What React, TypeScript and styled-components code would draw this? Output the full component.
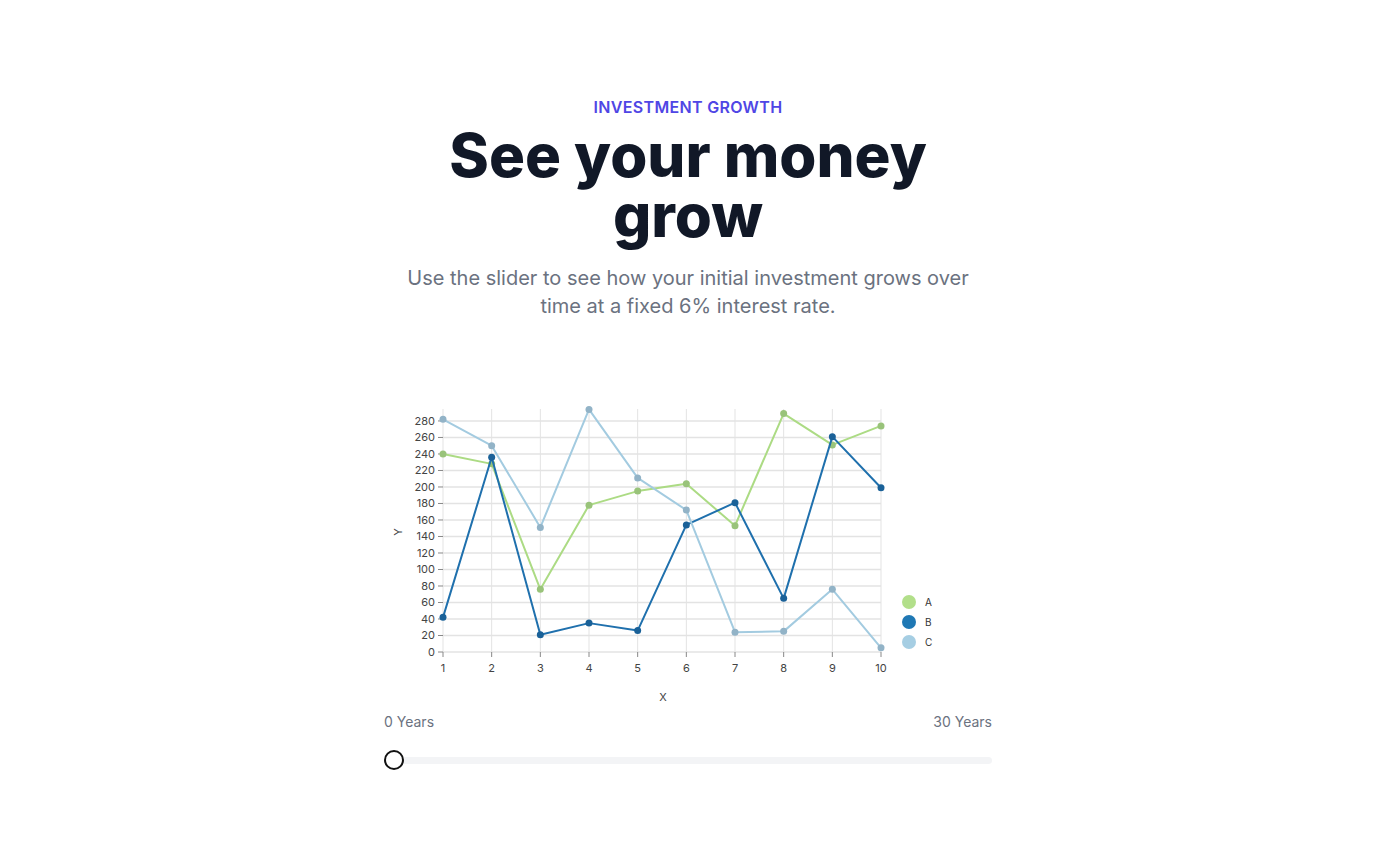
import React from "react";
import styled, { createGlobalStyle } from "styled-components";

const GlobalStyle = createGlobalStyle`
  html, body { margin: 0; padding: 0; background: #ffffff; }
  body { font-family: Inter, "Noto Sans", sans-serif; -webkit-font-smoothing: antialiased; }
  * { box-sizing: border-box; }
`;

const Page = styled.main`
  display: flex;
  flex-direction: column;
  align-items: center;
  padding-top: 93px;
  padding-bottom: 60px;
`;

const Hero = styled.header`
  display: flex;
  flex-direction: column;
  align-items: center;
  text-align: center;
  max-width: 672px;
`;

const Eyebrow = styled.p`
  margin: 0;
  font-size: 16px;
  line-height: 28px;
  font-weight: 600;
  color: #4f46e5;
  letter-spacing: 0.02em;
`;

const Title = styled.h1`
  margin: 4px 0 0;
  font-size: 60px;
  line-height: 60px;
  font-weight: 800;
  color: #111827;
  max-width: 520px;
`;

const Subtitle = styled.p`
  margin: 19px 0 0;
  max-width: 576px;
  font-size: 20px;
  line-height: 28px;
  color: #6b7280;
`;

const Panel = styled.section`
  width: 608px;
  margin-top: 80px;
  display: flex;
  flex-direction: column;
`;

const ChartSvg = styled.svg`
  display: block;
  width: 608px;
  height: 310px;
  font-family: Inter, "Noto Sans", sans-serif;
`;

const SliderLabels = styled.div`
  display: flex;
  justify-content: space-between;
  margin-top: 2px;
  font-size: 14px;
  line-height: 20px;
  color: #6b7280;
`;

const Range = styled.input`
  -webkit-appearance: none;
  appearance: none;
  width: 608px;
  height: 20px;
  margin: 18px 0 0;
  padding: 0;
  background: transparent;
  outline: none;

  &::-webkit-slider-runnable-track {
    height: 7px;
    background: #f3f4f6;
    border-radius: 4px;
  }
  &::-webkit-slider-thumb {
    -webkit-appearance: none;
    width: 20px;
    height: 20px;
    margin-top: -6.5px;
    border-radius: 50%;
    background: #ffffff;
    border: 2px solid #111111;
  }
`;

type Series = { name: string; line: string; point: string; legend: string; values: number[] };

const series: Series[] = [
  { name: "A", line: "#acdb84", point: "#99c37a", legend: "#b2df8a", values: [240, 228, 76, 178, 195, 204, 153, 289, 251, 274] },
  { name: "B", line: "#1f70ad", point: "#1a6198", legend: "#1f78b4", values: [42, 236, 21, 35, 26, 154, 181, 65, 261, 199] },
  { name: "C", line: "#a3cbe0", point: "#92b3c7", legend: "#a6cee3", values: [282, 250, 151, 294, 211, 172, 24, 25, 76, 5] },
];

const PL = 59;
const PR = 497;
const PT = 9;
const PB = 252;
const YMAX = 294.5;

const xPos = (i: number) => PL + ((PR - PL) / 9) * i;
const yPos = (v: number) => PB - (v / YMAX) * (PB - PT);

function Chart() {
  const yTicks = Array.from({ length: 15 }, (_, i) => i * 20);
  const xTicks = Array.from({ length: 10 }, (_, i) => i);
  return (
    <ChartSvg viewBox="0 0 608 310">
      {yTicks.map((t) => (
        <line key={"gy" + t} x1={PL} x2={PR} y1={yPos(t)} y2={yPos(t)} stroke="#e3e3e3" strokeWidth={1.5} />
      ))}
      {xTicks.map((i) => (
        <line key={"gx" + i} x1={xPos(i)} x2={xPos(i)} y1={PT} y2={PB} stroke="#e3e3e3" strokeWidth={1} />
      ))}
      {yTicks.map((t) => (
        <g key={"yt" + t}>
          <line x1={PL - 5} x2={PL} y1={yPos(t)} y2={yPos(t)} stroke="#888" strokeWidth={1} />
          <text x={PL - 8} y={yPos(t) + 3.8} fontSize={11} fill="#444" textAnchor="end">
            {t}
          </text>
        </g>
      ))}
      {xTicks.map((i) => (
        <g key={"xt" + i}>
          <line x1={xPos(i)} x2={xPos(i)} y1={PB} y2={PB + 5} stroke="#888" strokeWidth={1} />
          <text x={xPos(i)} y={PB + 20} fontSize={11} fill="#444" textAnchor="middle">
            {i + 1}
          </text>
        </g>
      ))}
      <text x={18} y={132} fontSize={11} fill="#444" textAnchor="middle" transform="rotate(-90 18 132)">
        Y
      </text>
      <text x={279} y={301} fontSize={11} fill="#444" textAnchor="middle">
        X
      </text>
      {series.map((s) => (
        <g key={s.name}>
          <polyline
            points={s.values.map((v, i) => `${xPos(i)},${yPos(v)}`).join(" ")}
            fill="none"
            stroke={s.line}
            strokeWidth={2}
            strokeLinejoin="round"
          />
          {s.values.map((v, i) => (
            <circle key={i} cx={xPos(i)} cy={yPos(v)} r={3.5} fill={s.point} />
          ))}
        </g>
      ))}
      {series.map((s, i) => (
        <g key={"lg" + s.name}>
          <circle cx={525} cy={202 + i * 20} r={7} fill={s.legend} />
          <text x={541} y={205.5 + i * 20} fontSize={10} fill="#333">
            {s.name}
          </text>
        </g>
      ))}
    </ChartSvg>
  );
}

export default function App() {
  const [years, setYears] = React.useState(0);
  return (
    <>
      <GlobalStyle />
      <Page>
        <Hero>
          <Eyebrow>INVESTMENT GROWTH</Eyebrow>
          <Title>See your money grow</Title>
          <Subtitle>
            Use the slider to see how your initial investment grows over time at a fixed 6% interest rate.
          </Subtitle>
        </Hero>
        <Panel>
          <Chart />
          <SliderLabels>
            <span>0 Years</span>
            <span>30 Years</span>
          </SliderLabels>
          <Range
            type="range"
            min={0}
            max={30}
            value={years}
            onChange={(e) => setYears(Number(e.target.value))}
          />
        </Panel>
      </Page>
    </>
  );
}
